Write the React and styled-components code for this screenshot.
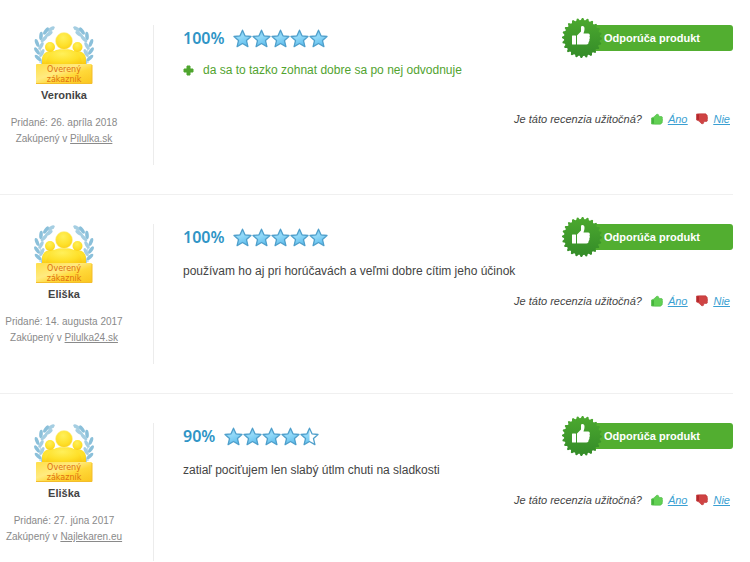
import React from 'react'
import styled, { createGlobalStyle } from 'styled-components'

const GlobalStyle = createGlobalStyle`
    body {
        margin: 0;
        background: #fff;
        color: #444;
        font-family: "Liberation Sans", Arial, sans-serif;
        font-size: 12px;
    }
`

const ReviewList = styled.main`
    margin-right: 17px;
`

const Review = styled.article`
    display: flex;
    padding: 29px 0;
    border-bottom: 1px solid #f0f0f0;

    &:first-child {
        padding-top: 25px;
    }

    &:last-child {
        padding-bottom: 0;
        border-bottom: 0;
    }
`

const Author = styled.div`
    flex: none;
    width: 128px;
    padding: 1px 25px 18px 0;
    border-right: 1px solid #ececec;
    display: flex;
    flex-direction: column;
    align-items: center;

    ${Review}:last-child & {
        padding-bottom: 16px;
    }
`

const AuthorName = styled.h3`
    margin: 1px 0 12px;
    font-size: 11px;
    line-height: 16px;
`

const AuthorMeta = styled.div`
    color: #8a8a8a;
    font-size: 10px;
    line-height: 16px;
    white-space: nowrap;

    a {
        color: inherit;
    }
`

const Content = styled.div`
    flex: 1;
    padding-left: 29px;
`

const Header = styled.div`
    display: flex;
    align-items: center;
    height: 26px;
`

const Percent = styled.strong`
    color: #2f95c6;
    font-family: "Noto Sans", sans-serif;
    font-size: 16px;
    font-weight: 600;
    line-height: 26px;
`

const Stars = styled.span`
    display: flex;
    margin-left: 9px;
`

const Recommend = styled.div`
    position: relative;
    box-sizing: border-box;
    width: 158px;
    height: 26px;
    margin-left: auto;
    padding-left: 29px;
    border-radius: 3px;
    background: #52ae30;
    color: #fff;
    font-size: 11px;
    font-weight: bold;
    line-height: 26px;
`

const SealIcon = styled.svg`
    position: absolute;
    top: -7px;
    left: -13px;
`

const Pros = styled.ul`
    margin: 9px 0 29px;
    padding: 0;
    list-style: none;
    color: #52a32f;
    line-height: 20px;

    li {
        display: flex;
        align-items: center;
        gap: 9px;
    }
`

const Text = styled.p`
    margin: 11px 0 10px;
    line-height: 20px;
`

const Vote = styled.div`
    display: flex;
    justify-content: flex-end;
    align-items: center;
    gap: 9px;
    padding-right: 3px;
    font-size: 11px;
    font-style: italic;
    line-height: 20px;
`

const VoteLink = styled.a`
    display: flex;
    align-items: center;
    gap: 5px;
    color: #3a9fd2;

    span {
        text-decoration: underline;
    }
`

const reviews = [
    {
        name: 'Veronika',
        date: '26. apríla 2018',
        shop: 'Pilulka.sk',
        percent: 100,
        pros: ['da sa to tazko zohnat dobre sa po nej odvodnuje'],
    },
    {
        name: 'Eliška',
        date: '14. augusta 2017',
        shop: 'Pilulka24.sk',
        percent: 100,
        text: 'používam ho aj pri horúčavách a veľmi dobre cítim jeho účinok',
    },
    {
        name: 'Eliška',
        date: '27. júna 2017',
        shop: 'Najlekaren.eu',
        percent: 90,
        text: 'zatiaľ pociťujem len slabý útlm chuti na sladkosti',
    },
]

// x, y, rotation of each leaf on the left half of the wreath
const leaves = [
    [17, 3, 150], [12, 5, 125], [15, 8, 145], [7, 10, 95], [10, 13, 135],
    [3, 17, 70], [7, 20, 120], [3, 25, 55], [8, 27, 115], [4, 32, 45], [9, 34, 110],
]

const Laurel = () => (
    <g>
        <path d="M20 3C10 7 5 17 6 37" fill="none" stroke="#b4d7e6" strokeWidth="1" />
        {leaves.map(([x, y, r], i) => (
            <ellipse
                key={i}
                cx={x}
                cy={y}
                rx="4.2"
                ry="1.8"
                fill={i % 2 ? '#8bc0da' : '#a5cee2'}
                transform={`rotate(${r} ${x} ${y})`}
            />
        ))}
    </g>
)

const VerifiedBadge = () => (
    <svg width="60" height="60" viewBox="0 0 60 60" role="img">
        <defs>
            <radialGradient id="gold" cx="0.45" cy="0.3" r="0.8">
                <stop offset="0" stopColor="#fff05a" />
                <stop offset="0.6" stopColor="#fee02a" />
                <stop offset="1" stopColor="#f9c912" />
            </radialGradient>
            <linearGradient id="banner" x1="0" y1="0" x2="1" y2="1">
                <stop offset="0" stopColor="#ffdf4a" />
                <stop offset="0.4" stopColor="#ffea80" />
                <stop offset="0.6" stopColor="#ffd93a" />
                <stop offset="1" stopColor="#fac51e" />
            </linearGradient>
        </defs>
        <Laurel />
        <g transform="translate(60 0) scale(-1 1)">
            <Laurel />
        </g>
        <path d="M8 39V34C8 28 12 25 17 25H43C48 25 52 28 52 34V39Z" fill="url(#gold)" />
        <circle cx="16" cy="21" r="5" fill="url(#gold)" />
        <circle cx="43.500" cy="21" r="5" fill="url(#gold)" />
        <path d="M12 39C12 29 18 23 30 23S48 29 48 39Z" fill="url(#gold)" />
        <circle cx="30" cy="15" r="8.500" fill="url(#gold)" stroke="#fff3a8" strokeWidth="0.5" />
        <rect x="2" y="38" width="56" height="20" rx="1" fill="url(#banner)" />
        <path d="M2 57.500H58V39" fill="none" stroke="#f3bd2c" strokeWidth="1" />
        <g fill="#e06f10" fontFamily="DejaVu Sans, sans-serif" fontSize="8" textAnchor="middle">
            <text x="30" y="46">Overený</text>
            <text x="30" y="56">zákazník</text>
        </g>
    </svg>
)

const starPath = 'M9.500 1.200L12 6.800L18 7.500L13.500 11.600L14.900 17.600L9.500 14.500L4.100 17.600L5.500 11.600L1 7.500L7 6.800Z'

const Star = ({ half }) => (
    <svg width="19" height="19" viewBox="0 0 19 19">
        <defs>
            <linearGradient id="starFill" x1="0" y1="0" x2="0.4" y2="1">
                <stop offset="0" stopColor="#6cc4ee" />
                <stop offset="0.5" stopColor="#93d9f8" />
                <stop offset="1" stopColor="#62c0ee" />
            </linearGradient>
            <clipPath id="leftHalf">
                <rect width="9.500" height="19" />
            </clipPath>
        </defs>
        {half && <path d={starPath} fill="#fff" />}
        <path d={starPath} fill="url(#starFill)" clipPath={half ? 'url(#leftHalf)' : undefined} />
        <path d={starPath} fill="none" stroke="#4f9fcb" strokeWidth="1.300" strokeLinejoin="round" />
    </svg>
)

const teeth = 24
const sealPoints = Array.from({ length: teeth * 4 }, (_, i) => {
    const r = i % 4 < 2 ? 20 : 18
    const a = (i / (teeth * 4)) * Math.PI * 2
    return `${(20 + r * Math.cos(a)).toFixed(2)},${(20 + r * Math.sin(a)).toFixed(2)}`
}).join(' ')

const Seal = () => (
    <SealIcon width="40" height="40" viewBox="0 0 40 40">
        <defs>
            <linearGradient id="seal" x1="0" y1="0" x2="0" y2="1">
                <stop offset="0" stopColor="#4ca92f" />
                <stop offset="1" stopColor="#338b28" />
            </linearGradient>
        </defs>
        <polygon points={sealPoints} fill="url(#seal)" />
        <rect x="10" y="17.500" width="4" height="9" rx="0.5" fill="#fff" />
        <path
            d="M15 17.500L19 13.500V9.500C19 7.500 22.500 7.500 22.500 10.500C22.500 12.500 22 14 21.500 15.500H26C28 15.500 28.200 17.500 27.500 18.500C28 19.500 28 20.500 27.300 21.300C27.700 22.300 27.300 23.500 26.600 24C26.600 25.800 25.800 26.500 24.500 26.500H15Z"
            fill="#fff"
        />
    </SealIcon>
)

const Thumb = ({ down }) => (
    <svg width="12" height="12" viewBox="0 0 12 12">
        <g transform={down ? 'matrix(1 0 0 -1 0 12)' : undefined}>
            <path
                d="M0.500 5L3 4L5 1.800C6 0.800 8 1.200 7.800 2.800L7.600 3.500H10.500C11.500 3.800 11.600 4.800 11.300 5.500C11.800 6.500 11.600 7.500 11.300 8.200C11.500 9.200 11.200 10 10.500 10.300C10.300 11 10 11.200 9 11.200H3.500L0.500 11Z"
                fill={down ? '#cf4343' : '#62d053'}
                stroke={down ? '#bd3538' : '#4cb843'}
                strokeWidth="0.600"
            />
            <path d="M0.800 5.500L3 5V10.800L0.800 10.500Z" fill={down ? '#b5282c' : '#45b33d'} />
        </g>
    </svg>
)

const Plus = () => (
    <svg width="11" height="11" viewBox="0 0 11 11">
        <path d="M4 1H7V4H10V7H7V10H4V7H1V4H4Z" fill="#4fa52e" stroke="#4fa52e" strokeLinejoin="round" />
    </svg>
)

export default function App() {
    return (
        <>
            <GlobalStyle />
            <ReviewList>
                {reviews.map(({ name, date, shop, percent, pros, text }) => (
                    <Review key={date}>
                        <Author>
                            <VerifiedBadge />
                            <AuthorName>{name}</AuthorName>
                            <AuthorMeta>Pridané: {date}</AuthorMeta>
                            <AuthorMeta>Zakúpený v <a href="#shop">{shop}</a></AuthorMeta>
                        </Author>
                        <Content>
                            <Header>
                                <Percent>{percent}%</Percent>
                                <Stars>
                                    {[20, 40, 60, 80, 100].map(step => (
                                        <Star key={step} half={percent < step} />
                                    ))}
                                </Stars>
                                <Recommend>
                                    <Seal />
                                    Odporúča produkt
                                </Recommend>
                            </Header>
                            {pros && (
                                <Pros>
                                    {pros.map(item => <li key={item}><Plus />{item}</li>)}
                                </Pros>
                            )}
                            {text && <Text>{text}</Text>}
                            <Vote>
                                Je táto recenzia užitočná?
                                <VoteLink href="#yes"><Thumb /><span>Áno</span></VoteLink>
                                <VoteLink href="#no"><Thumb down /><span>Nie</span></VoteLink>
                            </Vote>
                        </Content>
                    </Review>
                ))}
            </ReviewList>
        </>
    )
}
